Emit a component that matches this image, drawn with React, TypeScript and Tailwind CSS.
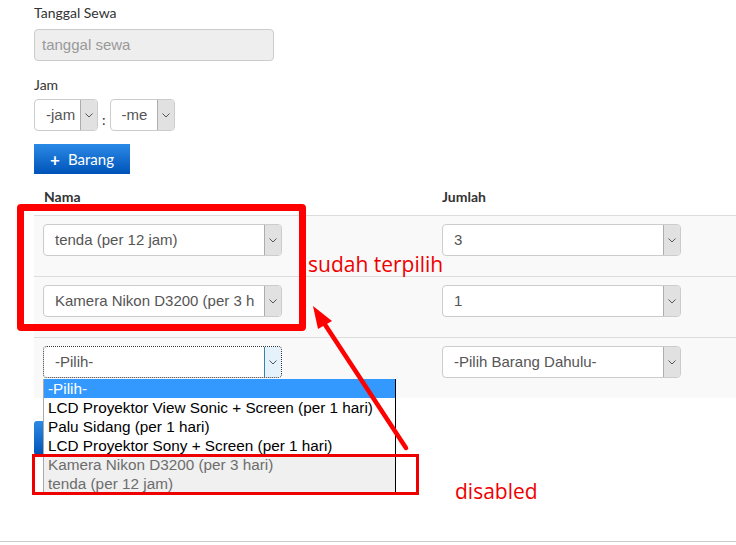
import React from "react"

const lato = { fontFamily: "Lato, 'Open Sans', sans-serif" }
const arial = { fontFamily: "'Liberation Sans', Arial, sans-serif" }

const Chevron = () => (
	<svg width="8" height="5" viewBox="0 0 8 5" fill="none">
		<path d="M0.5 0.5 L4 4 L7.5 0.5" stroke="#555" strokeWidth="1" />
	</svg>
)

type SelProps = {
	text: string
	className?: string
	focused?: boolean
}

const Sel = ({ text, className = "", focused = false }: SelProps) => (
	<div
		className={
			"flex h-[32px] overflow-hidden rounded-[4px] bg-white " +
			(focused ? "border border-dotted border-[#333] " : "border border-[#ccc] ") +
			className
		}
	>
		<span
			className="flex-1 overflow-hidden whitespace-nowrap pl-[11px] pr-[4px] text-[15px] leading-[30px] text-[#555]"
			style={arial}
		>
			{text}
		</span>
		<div
			className={
				"flex w-[17px] shrink-0 items-center justify-center border-l " +
				(focused ? "border-[#3c7fb1] bg-[#e5f1fb]" : "border-[#adadad] bg-[#e1e1e1]")
			}
		>
			<Chevron />
		</div>
	</div>
)

const Row = ({ nama, jumlah, focused }: { nama: string; jumlah: string; focused?: boolean }) => (
	<div className="flex h-[61px] border-t border-[#ddd] bg-[#f9f9f9]">
		<div className="w-[399px] pl-[9px] pt-[8px]">
			<Sel text={nama} className="w-[239px]" focused={focused} />
		</div>
		<div className="pl-[9px] pt-[8px]">
			<Sel text={jumlah} className="w-[239px]" />
		</div>
	</div>
)

const options = [
	{ label: "-Pilih-", state: "active" },
	{ label: "LCD Proyektor View Sonic + Screen (per 1 hari)", state: "" },
	{ label: "Palu Sidang (per 1 hari)", state: "" },
	{ label: "LCD Proyektor Sony + Screen (per 1 hari)", state: "" },
	{ label: "Kamera Nikon D3200 (per 3 hari)", state: "disabled" },
	{ label: "tenda (per 12 jam)", state: "disabled" },
]

export default function App() {
	return (
		<div className="relative h-[542px] w-[736px] overflow-hidden border-b border-[#ccc] bg-white text-[#333]">
			<div className="pl-[34px] pt-[3px]" style={lato}>
				<div className="text-[14px] leading-[20px]">Tanggal Sewa</div>
				<div
					className="mt-[6px] h-[32px] w-[240px] rounded-[4px] border border-[#ccc] bg-[#eee] pl-[7px] text-[15px] leading-[30px] text-[#999]"
					style={arial}
				>
					tanggal sewa
				</div>
				<div className="mt-[14px] text-[14px] leading-[20px]">Jam</div>
				<div className="mt-[4px] flex items-end gap-[4px]">
					<Sel text="-jam" className="w-[64px]" />
					<span className="pb-[3px] text-[14px] leading-[16px]">:</span>
					<Sel text="-me" className="w-[65px]" />
				</div>
				<button
					className="mt-[13px] flex h-[30px] w-[96px] items-center justify-center gap-[8px] bg-gradient-to-b from-[#2b8ae6] to-[#0053b8] text-[15px] text-white"
					style={lato}
				>
					<span className="text-[17px] font-bold leading-none">+</span>
					<span>Barang</span>
				</button>
				<div className="mt-[6px]">
					<div className="flex h-[35px] items-center pb-[3px] text-[14px] font-bold">
						<div className="w-[399px] pl-[10px]">Nama</div>
						<div className="pl-[9px]">Jumlah</div>
					</div>
					<Row nama="tenda (per 12 jam)" jumlah="3" />
					<Row nama="Kamera Nikon D3200 (per 3 h" jumlah="1" />
					<Row nama="-Pilih-" jumlah="-Pilih Barang Dahulu-" focused />
				</div>
				{/* save button, hidden behind the open list */}
				<div className="mt-[23px] h-[34px] w-[90px] rounded-[3px] bg-gradient-to-b from-[#2b8ae6] to-[#0053b8]" />
			</div>

			{/* open dropdown */}
			<div
				className="absolute left-[43px] top-[379px] w-[353px] border-l border-r border-l-[#aaa] border-r-black bg-white text-[15.3px] leading-[19px]"
				style={arial}
			>
				{options.map((o) => (
					<div
						key={o.label}
						className={
							"whitespace-nowrap pl-[4px] " +
							(o.state === "active"
								? "bg-[#3399ff] text-white"
								: o.state === "disabled"
									? "bg-[#f0f0f0] text-[#6d6d6d]"
									: "text-black")
						}
					>
						{o.label}
					</div>
				))}
			</div>

			{/* annotations */}
			<div className="absolute left-[17px] top-[204px] h-[127px] w-[289px] rounded-[4px] border-[7px] border-[#f00]" />
			<div className="absolute left-[32px] top-[454px] h-[41px] w-[387px] border-[3px] border-[#e00]" />
			<svg className="absolute left-0 top-0" width="736" height="545" viewBox="0 0 736 545">
				<line x1="406" y1="448" x2="322" y2="320" stroke="#f00" strokeWidth="4.5" strokeLinecap="round" />
				<polygon points="313,306 332,321 318,329" fill="#f00" />
			</svg>
			<div
				className="absolute left-[308px] top-[251px] text-[21px] leading-[26px] text-[#e00]"
				style={{ fontFamily: "'Open Sans', sans-serif" }}
			>
				sudah terpilih
			</div>
			<div
				className="absolute left-[455px] top-[478px] text-[21px] leading-[26px] text-[#e00]"
				style={{ fontFamily: "'Open Sans', sans-serif" }}
			>
				disabled
			</div>
		</div>
	)
}
